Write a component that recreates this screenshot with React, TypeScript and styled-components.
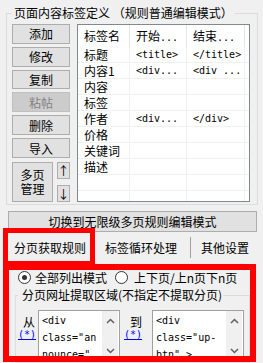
import React from 'react';
import styled, { createGlobalStyle } from 'styled-components';

const CJK = `"Noto Sans CJK SC", "Noto Sans", sans-serif`;
const MONO = `"DejaVu Sans Mono", "Liberation Mono", monospace`;

const GlobalStyle = createGlobalStyle`
  html, body {
    margin: 0;
    padding: 0;
    background: #f0f0f0;
  }
  #root {
    width: 263px;
    height: 363px;
    overflow: hidden;
  }
`;

const Page = styled.div`
  position: relative;
  width: 263px;
  height: 363px;
  box-sizing: border-box;
  padding-top: 5px;
  background: #f0f0f0;
  font-family: ${CJK};
  font-size: 12px;
  color: #000;
  overflow: hidden;
`;

const GroupBox = styled.fieldset`
  margin: 0 5px 0 6px;
  padding: 3px 7px 2px 5px;
  border: 1px solid #dcdcdc;
  min-width: 0;
`;

const Legend = styled.legend`
  padding: 0 2px;
  line-height: 16px;
  font-size: 12px;
`;

const Body = styled.div`
  display: flex;
  gap: 7px;
  height: 178px;
`;

const ButtonCol = styled.div`
  width: 58px;
  display: flex;
  flex-direction: column;
  gap: 3px;
`;

const Button = styled.div<{ $disabled?: boolean; $h?: number }>`
  box-sizing: border-box;
  height: ${(p) => p.$h ?? 20}px;
  display: flex;
  align-items: center;
  justify-content: center;
  background: ${(p) => (p.$disabled ? '#cccccc' : '#e1e1e1')};
  border: 1px solid ${(p) => (p.$disabled ? '#bfbfbf' : '#adadad')};
  color: ${(p) => (p.$disabled ? '#838383' : '#000')};
  font-size: 12px;
`;

const MultiRow = styled.div`
  display: flex;
  gap: 4px;
  height: 40px;
  margin-top: 1px;
`;

const MultiButton = styled(Button)`
  width: 41px;
  text-align: center;
  white-space: pre-line;
  font-size: 12px;
  line-height: 14px;
`;

const ArrowCol = styled.div`
  width: 13px;
  display: flex;
  flex-direction: column;
  justify-content: space-between;
`;

const ListView = styled.div`
  flex: 1;
  height: 178px;
  box-sizing: border-box;
  border: 1px solid #828790;
  background: #fff;
  overflow: hidden;
  display: grid;
  grid-template-columns: 52px 57px 58px 1fr;
  grid-auto-rows: 16px;
  grid-template-rows: 22px;
  align-content: start;
`;

const HeadCell = styled.div`
  border-right: 1px solid #e5e5e5;
  padding-left: 6px;
  line-height: 22px;
  white-space: nowrap;
  overflow: hidden;
`;

const Cell = styled.div<{ $mono?: boolean; $last?: boolean }>`
  box-sizing: border-box;
  border-bottom: 1px solid #f0f0f0;
  border-right: ${(p) => (p.$last ? 'none' : '1px solid #f0f0f0')};
  padding-left: 6px;
  line-height: 16px;
  white-space: nowrap;
  overflow: hidden;
  font-family: ${(p) => (p.$mono ? MONO : CJK)};
  font-size: ${(p) => (p.$mono ? '10px' : '12px')};
`;

const Mono = styled.span`
  font-family: ${MONO};
  font-size: 10px;
`;

const SwitchButton = styled(Button)`
  height: 21px;
  margin: 6px 6px 0 8px;
`;

const TabStrip = styled.div`
  display: flex;
  align-items: center;
  height: 30px;
  padding-left: 14px;
`;

const Tab = styled.div<{ $gap?: number }>`
  margin-right: ${(p) => p.$gap ?? 0}px;
  white-space: nowrap;
`;

const TabDivider = styled.div`
  width: 1px;
  height: 21px;
  background: #a0a0a0;
  margin: 0 10px 0 13px;
`;

const RadioRow = styled.div`
  display: flex;
  align-items: center;
  height: 14px;
  margin-top: 8px;
  padding-left: 18px;
`;

const Radio = styled.span<{ $checked?: boolean }>`
  box-sizing: border-box;
  width: 13px;
  height: 13px;
  border-radius: 50%;
  border: 1px solid #333;
  background: #fff;
  display: flex;
  align-items: center;
  justify-content: center;
  margin-right: ${(p) => (p.$checked ? 4 : 6)}px;
  &::after {
    content: '';
    width: 5px;
    height: 5px;
    border-radius: 50%;
    background: ${(p) => (p.$checked ? '#333' : 'transparent')};
  }
`;

const RadioLabel = styled.span<{ $gap?: number }>`
  margin-right: ${(p) => p.$gap ?? 0}px;
  white-space: nowrap;
`;

const InnerGroup = styled.fieldset`
  margin: 4px 13px 0 15px;
  padding: 8px 0 0 2px;
  border: 1px solid #dcdcdc;
  min-width: 0;
`;

const InnerLegend = styled.legend`
  padding: 0 1px 0 4px;
  line-height: 14px;
  white-space: nowrap;
`;

const Row = styled.div`
  display: flex;
  align-items: flex-start;
`;

const LinkCol = styled.div<{ $w: number; $ml?: number; $mr: number }>`
  width: ${(p) => p.$w}px;
  margin-left: ${(p) => p.$ml ?? 0}px;
  margin-right: ${(p) => p.$mr}px;
  padding-top: 5px;
  text-align: right;
  line-height: 14px;
`;

const Link = styled.div`
  color: #0000ff;
  text-decoration: underline;
  font-family: ${MONO};
  font-size: 10px;
  line-height: 12px;
`;

const TextBox = styled.div<{ $w: number }>`
  box-sizing: border-box;
  width: ${(p) => p.$w}px;
  height: 52px;
  border: 1px solid #a0a0a0;
  background: #fff;
  display: flex;
`;

const TextContent = styled.div`
  flex: 1;
  padding: 1px 0 0 3px;
  font-family: ${MONO};
  font-size: 10px;
  line-height: 17px;
  white-space: pre;
  overflow: hidden;
`;

const ScrollBar = styled.div`
  width: 16px;
  margin-right: 1px;
  background: #f0f0f0;
  display: flex;
  flex-direction: column;
  justify-content: space-between;
  align-items: center;
  padding: 7px 0 7px;
`;

const Highlight = styled.div<{ $l: number; $t: number; $w: number; $h: number; $b: number }>`
  position: absolute;
  left: ${(p) => p.$l}px;
  top: ${(p) => p.$t}px;
  width: ${(p) => p.$w}px;
  height: ${(p) => p.$h}px;
  box-sizing: border-box;
  border: ${(p) => p.$b}px solid #ff0000;
  pointer-events: none;
`;

const Chevron = ({ up }: { up?: boolean }) => (
  <svg width="9" height="6" viewBox="0 0 9 6">
    <path
      d={up ? 'M1 5 L4.5 1.5 L8 5' : 'M1 1 L4.5 4.5 L8 1'}
      fill="none"
      stroke="#606060"
      strokeWidth="1.5"
    />
  </svg>
);

const rows: [string, string, string][] = [
  ['标题', '<title>', '</title>'],
  ['内容1', '<div...', '<div ...'],
  ['内容', '', ''],
  ['标签', '', ''],
  ['作者', '<div...', '</div>'],
  ['价格', '', ''],
  ['关键词', '', ''],
  ['描述', '', ''],
  ['', '', ''],
  ['', '', ''],
];

export default function App() {
  return (
    <>
      <GlobalStyle />
      <Page>
        <GroupBox>
          <Legend>页面内容标签定义 （规则普通编辑模式）</Legend>
          <Body>
            <ButtonCol>
              <Button>添加</Button>
              <Button>修改</Button>
              <Button>复制</Button>
              <Button $disabled>粘帖</Button>
              <Button>删除</Button>
              <Button>导入</Button>
              <MultiRow>
                <MultiButton $h={40}>{'多页\n管理'}</MultiButton>
                <ArrowCol>
                  <Button $h={17}>↑</Button>
                  <Button $h={17}>↓</Button>
                </ArrowCol>
              </MultiRow>
            </ButtonCol>
            <ListView>
              <HeadCell>标签名</HeadCell>
              <HeadCell>
                开始<Mono>...</Mono>
              </HeadCell>
              <HeadCell>
                结束<Mono>...</Mono>
              </HeadCell>
              <div />
              {rows.map(([name, start, end], i) => (
                <React.Fragment key={i}>
                  <Cell>{name}</Cell>
                  <Cell $mono>{start}</Cell>
                  <Cell $mono>{end}</Cell>
                  <Cell $last />
                </React.Fragment>
              ))}
            </ListView>
          </Body>
        </GroupBox>

        <SwitchButton>切换到无限级多页规则编辑模式</SwitchButton>

        <TabStrip>
          <Tab $gap={19}>分页获取规则</Tab>
          <Tab>标签循环处理</Tab>
          <TabDivider />
          <Tab>其他设置</Tab>
        </TabStrip>

        <RadioRow>
          <Radio $checked />
          <RadioLabel $gap={8}>全部列出模式</RadioLabel>
          <Radio />
          <RadioLabel>上下页/上n页下n页</RadioLabel>
        </RadioRow>

        <InnerGroup>
          <InnerLegend>分页网址提取区域(不指定不提取分页)</InnerLegend>
          <Row>
            <LinkCol $w={17} $mr={3}>
              从<Link>(*)</Link>
            </LinkCol>
            <TextBox $w={82}>
              <TextContent>{'<div\nclass="an\nnounce="'}</TextContent>
              <ScrollBar>
                <Chevron up />
                <Chevron />
              </ScrollBar>
            </TextBox>
            <LinkCol $w={18} $ml={4} $mr={10}>
              到<Link>(*)</Link>
            </LinkCol>
            <TextBox $w={92}>
              <TextContent>{'<div\nclass="up-\nbtn" >'}</TextContent>
              <ScrollBar>
                <Chevron up />
                <Chevron />
              </ScrollBar>
            </TextBox>
          </Row>
        </InnerGroup>

        <Highlight $l={3} $t={228} $w={92} $h={38} $b={5} />
        <Highlight $l={3} $t={264} $w={253} $h={98} $b={6} />
      </Page>
    </>
  );
}
